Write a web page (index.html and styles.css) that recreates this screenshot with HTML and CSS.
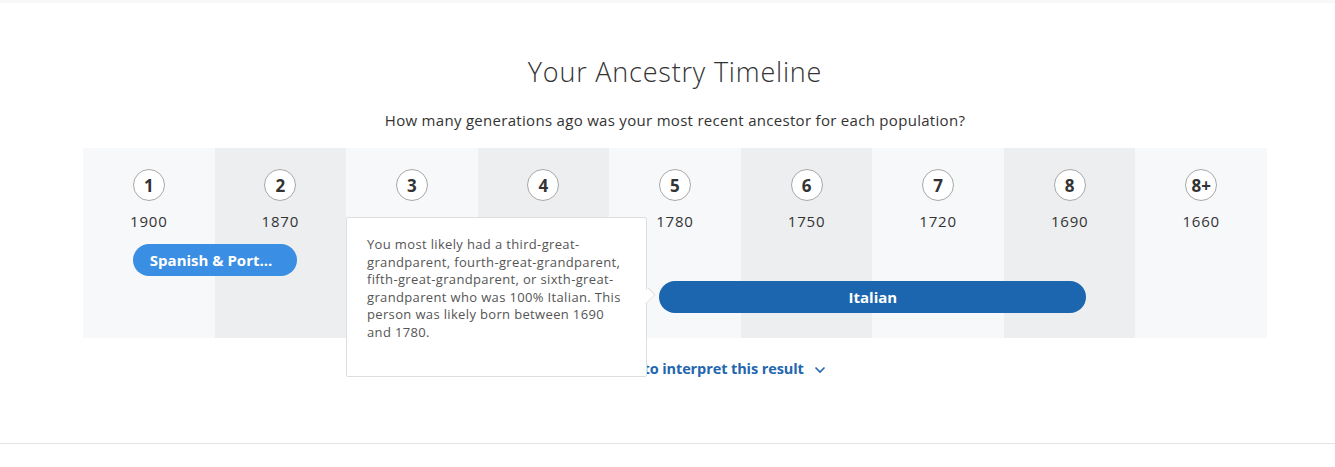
FILE: index.html
```html
<!DOCTYPE html>
<html>
<head>
  <title>Your Ancestry Timeline</title>
  <link rel="stylesheet" href="styles.css">
</head>
<body>
  <div class="topbar"></div>

  <!-- Timeline section -->
  <div class="section">
    <div class="wrap">
      <h1>Your Ancestry Timeline</h1>
      <p class="subtitle">How many generations ago was your most recent ancestor for each population?</p>

      <div class="timeline">
        <div class="gen"><span class="num">1</span><span class="year">1900</span></div>
        <div class="gen"><span class="num">2</span><span class="year">1870</span></div>
        <div class="gen"><span class="num">3</span><span class="year">1840</span></div>
        <div class="gen"><span class="num">4</span><span class="year">1810</span></div>
        <div class="gen"><span class="num">5</span><span class="year">1780</span></div>
        <div class="gen"><span class="num">6</span><span class="year">1750</span></div>
        <div class="gen"><span class="num">7</span><span class="year">1720</span></div>
        <div class="gen"><span class="num">8</span><span class="year">1690</span></div>
        <div class="gen"><span class="num">8+</span><span class="year">1660</span></div>

        <div class="bar spanish" style="grid-column: 1 / 3;"><span>Spanish &amp; Port...</span></div>
        <div class="bar italian" style="grid-column: 5 / 9;"><span>Italian</span></div>

        <div class="tooltip">
          You most likely had a third-great-grandparent, fourth-great-grandparent, fifth-great-grandparent, or sixth-great-grandparent who was 100% Italian. This person was likely born between 1690 and 1780.
        </div>
      </div>

      <div class="more">
        <a href="#" class="more-link">How to interpret this result
          <svg width="12" height="8" viewBox="0 0 12 8"><path d="M1.5 1.5 L6 6 L10.5 1.5" fill="none" stroke="currentColor" stroke-width="1.6"/></svg>
        </a>
      </div>
    </div>
  </div>
</body>
</html>
```

FILE: styles.css
```css
body {
  margin: 0;
  background: #fff;
  font-family: 'Open Sans', Lato, sans-serif;
  color: #333;
}

.topbar {
  height: 3px;
  background: #f7f8fa;
}

.section {
  padding: 53px 0 64px 15px;
  border-bottom: 1px solid #e3e3e3;
}

.wrap {
  width: 1184px;
  margin: 0 auto;
}

h1 {
  margin: 0;
  font-size: 27px;
  line-height: 32px;
  font-weight: 300;
  letter-spacing: 0.8px;
  text-align: center;
  color: #333;
}

.subtitle {
  margin: 22px 0 18px;
  font-size: 15px;
  line-height: 20px;
  letter-spacing: 0.3px;
  text-align: center;
  color: #333;
}

/* 9 generation columns, alternating stripes */
.timeline {
  position: relative;
  display: grid;
  grid-template-columns: repeat(9, 1fr);
  grid-template-rows: auto auto auto;
  height: 190px;
  align-content: start;
  background: linear-gradient(to right,
    #f7f8fa 0 11.111%, #edeef0 11.111% 22.222%,
    #f7f8fa 22.222% 33.333%, #edeef0 33.333% 44.444%,
    #f7f8fa 44.444% 55.556%, #edeef0 55.556% 66.667%,
    #f7f8fa 66.667% 77.778%, #edeef0 77.778% 88.889%,
    #f7f8fa 88.889% 100%);
}

.gen {
  grid-row: 1;
  display: flex;
  flex-direction: column;
  align-items: center;
  padding-top: 21px;
}

.num {
  box-sizing: border-box;
  min-width: 32px;
  height: 32px;
  padding: 0 1px;
  border: 1px solid #a8a8a8;
  border-radius: 16px;
  background: #fff;
  display: flex;
  align-items: center;
  justify-content: center;
  font-size: 17px;
  font-weight: 700;
  color: #333;
}

.year {
  margin-top: 10px;
  font-size: 15px;
  line-height: 20px;
  letter-spacing: 0.8px;
  color: #333;
}

.bar {
  height: 32px;
  margin: 0 49px 0 50px;
  border-radius: 16px;
  color: #fff;
  font-size: 15px;
  font-weight: 700;
  display: flex;
  align-items: center;
  justify-content: center;
  white-space: nowrap;
}

.spanish {
  grid-row: 2;
  margin-top: 13px;
  padding-right: 8px;
  background: #3a8ee3;
}

.italian {
  grid-row: 3;
  margin-top: 5px;
  background: #1b66ae;
}

.tooltip {
  position: absolute;
  left: 263px;
  top: 69px;
  box-sizing: border-box;
  width: 301px;
  height: 160px;
  padding: 18px 20px 0 20px;
  background: #fff;
  border: 1px solid #dedede;
  border-radius: 2px;
  font-size: 13px;
  line-height: 17.6px;
  letter-spacing: 0.35px;
  color: #555;
  z-index: 3;
}

.tooltip::after {
  content: '';
  position: absolute;
  right: -8px;
  top: 71px;
  width: 13px;
  height: 13px;
  background: #fff;
  border-top: 1px solid #dedede;
  border-right: 1px solid #dedede;
  transform: rotate(45deg) scaleX(0.7);
}

.more {
  margin-top: 19px;
  padding-left: 84px;
  text-align: center;
}

.more-link {
  font-size: 14.5px;
  line-height: 20px;
  font-weight: 700;
  letter-spacing: -0.1px;
  color: #2366ae;
  text-decoration: none;
}

.more-link svg {
  margin-left: 7px;
  vertical-align: middle;
}
```
